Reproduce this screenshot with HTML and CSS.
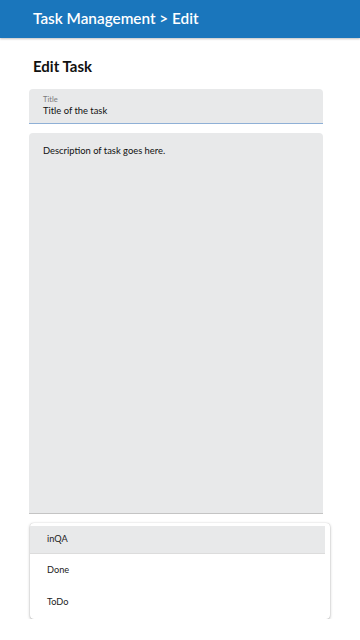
FILE: index.html
```html
<!DOCTYPE html>
<html lang="en">
<head>
  <meta charset="UTF-8">
  <meta name="viewport" content="width=device-width, initial-scale=1.0">
  <title>Task Management > Edit</title>
  <link rel="stylesheet" href="styles.css">
</head>

<body>
  <div class="header">Task Management &gt; Edit</div>

  <div class="container">
    <h1 class="page-title">Edit Task</h1>

    <div class="field title-field">
      <span class="field-label">Title</span>
      <span class="field-value">Title of the task</span>
    </div>

    <div class="field desc-field">
      <span class="field-value">Description of task goes here.</span>
    </div>

    <ul class="menu">
      <li class="selected">inQA</li>
      <li>Done</li>
      <li>ToDo</li>
    </ul>
  </div>
</body>
</html>
```

FILE: styles.css
```css
*{
  margin: 0;
  padding: 0;
  box-sizing: border-box;
}
body{
  font-family: Lato, "Noto Sans", sans-serif;
  background: #fff;
  color: #222;
}
li{
  list-style: none;
}
.header{
  height: 38px;
  line-height: 36px;
  padding-left: 33px;
  background: #1a76bc;
  color: #fff;
  font-size: 15.3px;
  font-weight: 600;
  box-shadow: 0 1px 2px rgba(0,0,0,0.25);
}
.container{
  padding: 0 37px 0 29px;
}
.page-title{
  font-size: 15px;
  font-weight: 700;
  color: #111;
  padding: 19px 0 0 4px;
  height: 51px;
}
.field{
  background: #e8e9ea;
  border-radius: 4px 4px 0 0;
  padding-left: 14px;
}
.title-field{
  height: 35px;
  border-bottom: 1px solid #8fb0d6;
  padding-top: 6px;
  display: flex;
  flex-direction: column;
}
.field-label{
  font-size: 7.5px;
  color: #7a7a7a;
  line-height: 9px;
}
.field-value{
  font-size: 9.4px;
  color: #111;
  line-height: 13px;
}
.desc-field{
  margin-top: 9px;
  height: 381px;
  padding-top: 11px;
  border-bottom: 1px solid #c4c4c4;
}
.desc-field .field-value{
  display: block;
}
.menu{
  margin: 9px -7px 0 1px;
  border-radius: 4px;
  background: #fff;
  box-shadow: 0 1px 3px rgba(0,0,0,0.3), 0 0 1px rgba(0,0,0,0.2);
  padding: 3px 5px 0 0;
  height: 96px;
}
.menu li{
  height: 32px;
  line-height: 32px;
  padding-left: 17px;
  font-size: 9.2px;
  color: #222;
}
.menu li.selected{
  height: 28px;
  line-height: 26px;
  background: #e8e9ea;
  border-bottom: 1px solid #dcdcdc;
}
```
